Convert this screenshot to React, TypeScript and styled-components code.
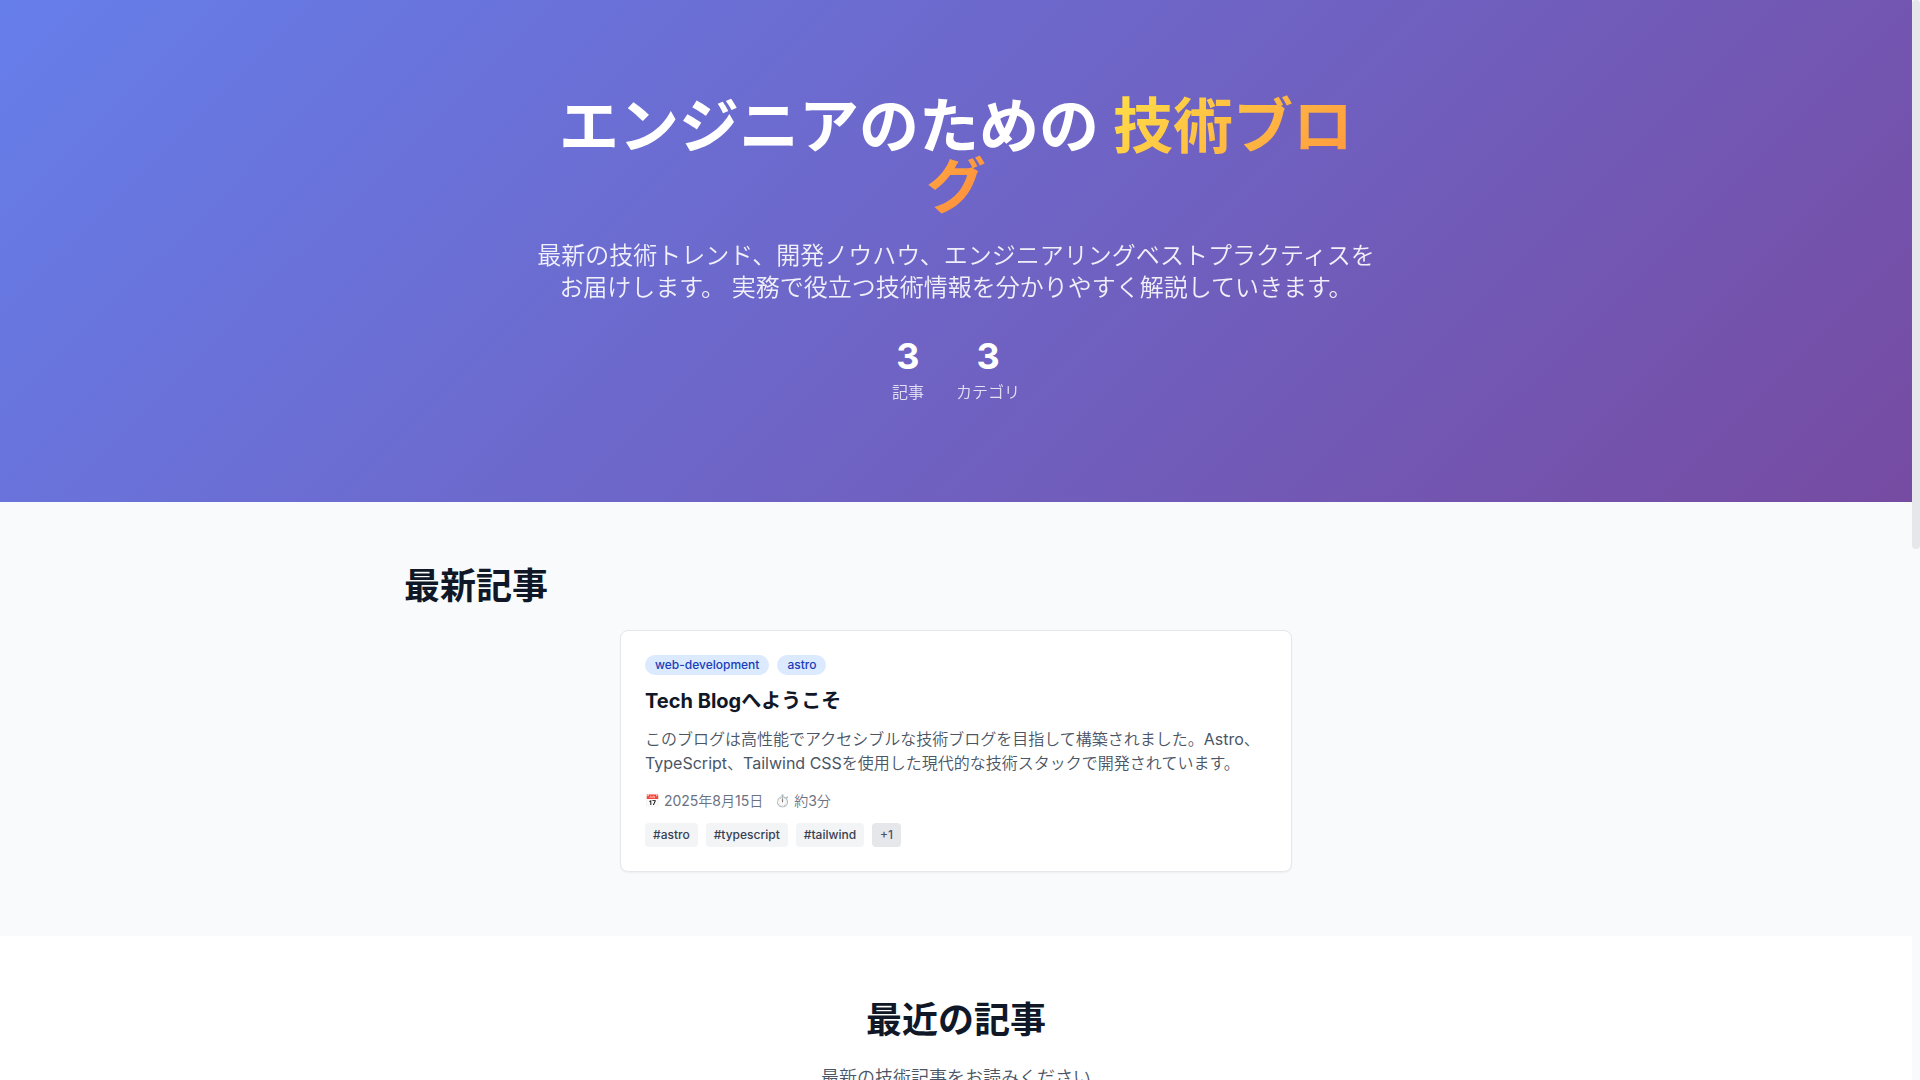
import React, { useEffect, useRef, useState } from 'react';
import styled, { createGlobalStyle } from 'styled-components';

const GlobalStyle = createGlobalStyle`
  *, *::before, *::after { box-sizing: border-box; }
  body {
    margin: 0;
    font-family: Inter, "Noto Sans CJK JP DemiLight", "Noto Sans CJK JP Light", "Noto Sans CJK JP", "Noto Color Emoji", sans-serif;
    font-size: 16px;
    line-height: 24px;
    color: #101828;
    background: #ffffff;
  }
  h1, h2, h3, p, ul, dl, dd { margin: 0; padding: 0; }
  h1, h2, h3 { font-family: Inter, "Noto Sans CJK JP", sans-serif; }
`;

const Shell = styled.div`
  display: grid;
  grid-template-columns: minmax(0, 1fr) 8px;
  height: 100vh;
`;

const Page = styled.main`
  overflow-y: auto;
  scrollbar-width: none;
`;

const ScrollRail = styled.div`
  overflow: hidden;
  background: #f9fafb;
`;

const ScrollThumb = styled.div`
  border-radius: 4px;
  background: #e5e7eb;
`;

const Hero = styled.section`
  padding: 96px 24px;
  background: linear-gradient(135deg, #667eea 0%, #764ba2 100%);
  color: #ffffff;
  text-align: center;
`;

const HeroInner = styled.div`
  max-width: 848px;
  margin: 0 auto;
`;

const HeroTitle = styled.h1`
  margin-bottom: 24px;
  font-size: 60px;
  line-height: 60px;
  font-weight: 700;
`;

const Highlight = styled.span`
  background: linear-gradient(135deg, #ffe047 0%, #ff8a3d 100%);
  -webkit-background-clip: text;
  background-clip: text;
  color: transparent;
`;

const HeroLead = styled.p`
  margin-bottom: 32px;
  font-size: 24px;
  line-height: 32px;
  opacity: 0.9;
`;

const Stats = styled.dl`
  display: flex;
  justify-content: center;
  gap: 32px;
`;

const Stat = styled.div`
  display: flex;
  flex-direction: column-reverse;
  gap: 4px;
`;

const StatLabel = styled.dt`
  padding-bottom: 2px;
  opacity: 0.8;
`;

const StatValue = styled.dd`
  font-size: 36px;
  line-height: 40px;
  font-weight: 700;
`;

const Section = styled.section<{ $background: string }>`
  padding: 64px 24px;
  background: ${({ $background }) => $background};
`;

const RecentSection = styled(Section)`
  min-height: 110vh;
  text-align: center;
`;

const Container = styled.div`
  max-width: 1104px;
  margin: 0 auto;
`;

const SectionTitle = styled.h2`
  margin-bottom: 24px;
  font-size: 36px;
  line-height: 40px;
  font-weight: 700;
`;

const SectionLead = styled.p`
  font-size: 18px;
  line-height: 28px;
  color: #4a5565;
`;

const Card = styled.article`
  display: flex;
  flex-direction: column;
  gap: 12px;
  max-width: 672px;
  margin: 0 auto;
  padding: 24px;
  background: #ffffff;
  border: 1px solid #e5e7eb;
  border-radius: 8px;
  box-shadow: 0 1px 2px rgba(0, 0, 0, 0.05);
`;

const ChipRow = styled.ul`
  display: flex;
  flex-wrap: wrap;
  gap: 8px;
  list-style: none;
  font-size: 12px;
  line-height: 16px;
  font-weight: 500;
`;

const Category = styled.li`
  padding: 2px 10px;
  border-radius: 10px;
  background: #dbeafe;
  color: #193cb8;
`;

const Tag = styled.li<{ $more?: boolean }>`
  padding: 4px 8px;
  border-radius: 4px;
  background: ${({ $more }) => ($more ? '#e5e7eb' : '#f3f4f6')};
  color: ${({ $more }) => ($more ? '#4a5565' : '#364153')};
`;

const CardTitle = styled.h3`
  font-size: 20px;
  line-height: 28px;
  font-weight: 700;
`;

const CardLink = styled.a`
  color: inherit;
  text-decoration: none;
`;

const Excerpt = styled.p`
  margin-bottom: 4px;
  color: #4a5565;
`;

const Meta = styled.div`
  display: flex;
  gap: 12px;
  font-size: 14px;
  line-height: 20px;
  color: #6a7282;
`;

const MetaItem = styled.span`
  display: flex;
  align-items: center;
  gap: 4px;
`;

const Emoji = styled.span`
  font-size: 12px;
`;

const stats = [
  { label: '記事', value: 3 },
  { label: 'カテゴリ', value: 3 },
];
const categories = ['web-development', 'astro'];
const tags = ['#astro', '#typescript', '#tailwind'];

export default function App() {
  const pageRef = useRef<HTMLElement>(null);
  const [thumb, setThumb] = useState({ height: 0, top: 0 });

  const measure = () => {
    const page = pageRef.current;
    if (!page) return;
    const ratio = page.clientHeight / page.scrollHeight;
    setThumb({
      height: Math.round(page.clientHeight * ratio),
      top: Math.round(page.scrollTop * ratio),
    });
  };

  useEffect(() => {
    measure();
    window.addEventListener('resize', measure);
    return () => window.removeEventListener('resize', measure);
  }, []);

  return (
    <>
      <GlobalStyle />
      <Shell lang="ja">
        <Page ref={pageRef} onScroll={measure}>
          <Hero>
            <HeroInner>
              <HeroTitle>
                エンジニアのための <Highlight>技術ブログ</Highlight>
              </HeroTitle>
              <HeroLead>
                最新の技術トレンド、開発ノウハウ、エンジニアリングベストプラクティスをお届けします。 実務で役立つ技術情報を分かりやすく解説していきます。
              </HeroLead>
              <Stats>
                {stats.map((s) => (
                  <Stat key={s.label}>
                    <StatLabel>{s.label}</StatLabel>
                    <StatValue>{s.value}</StatValue>
                  </Stat>
                ))}
              </Stats>
            </HeroInner>
          </Hero>

          <Section $background="#f9fafb">
            <Container>
              <SectionTitle>最新記事</SectionTitle>
              <Card>
                <ChipRow>
                  {categories.map((c) => (
                    <Category key={c}>{c}</Category>
                  ))}
                </ChipRow>
                <CardTitle>
                  <CardLink href="#welcome">Tech Blogへようこそ</CardLink>
                </CardTitle>
                <Excerpt>
                  このブログは高性能でアクセシブルな技術ブログを目指して構築されました。Astro、TypeScript、Tailwind CSSを使用した現代的な技術スタックで開発されています。
                </Excerpt>
                <Meta>
                  <MetaItem>
                    <Emoji aria-hidden="true">📅</Emoji>
                    <time dateTime="2025-08-15">2025年8月15日</time>
                  </MetaItem>
                  <MetaItem>
                    <Emoji aria-hidden="true">⏱️</Emoji>
                    <span>約3分</span>
                  </MetaItem>
                </Meta>
                <ChipRow>
                  {tags.map((t) => (
                    <Tag key={t}>{t}</Tag>
                  ))}
                  <Tag $more>+1</Tag>
                </ChipRow>
              </Card>
            </Container>
          </Section>

          <RecentSection $background="#ffffff">
            <Container>
              <SectionTitle>最近の記事</SectionTitle>
              <SectionLead>最新の技術記事をお読みください</SectionLead>
            </Container>
          </RecentSection>
        </Page>
        <ScrollRail aria-hidden="true">
          <ScrollThumb style={{ height: thumb.height, marginTop: thumb.top }} />
        </ScrollRail>
      </Shell>
    </>
  );
}
